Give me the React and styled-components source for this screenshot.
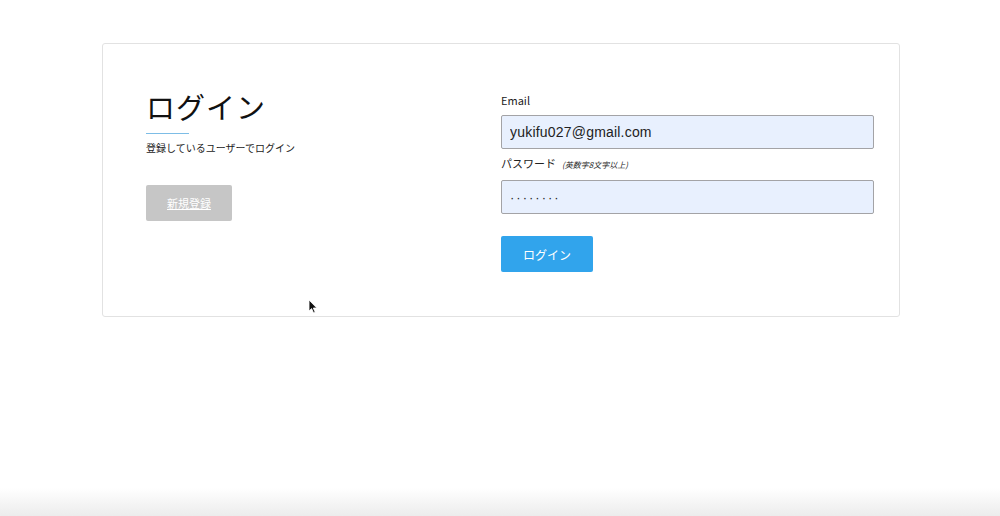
import React from "react";
import styled, { createGlobalStyle } from "styled-components";

const GlobalStyle = createGlobalStyle`
  html, body {
    margin: 0;
    padding: 0;
    background: #ffffff;
    font-family: "Noto Sans CJK JP", "Noto Sans", sans-serif;
    color: #222;
  }
`;

const Page = styled.div`
  position: relative;
  display: flex;
  flex-direction: column;
  height: 100vh;
  overflow: hidden;
`;

const Main = styled.div`
  flex: 1;
  padding: 43px 100px 0 102px;
`;

const Card = styled.div`
  display: grid;
  grid-template-columns: 1fr 373px;
  column-gap: 27px;
  padding: 46px 25px 44px 43px;
  border: 1px solid #e2e2e2;
  border-radius: 3px;
  background: #fff;
`;

const Intro = styled.div`
  display: flex;
  flex-direction: column;
  align-items: flex-start;
`;

const Title = styled.h1`
  margin: 0;
  font-size: 29px;
  font-weight: 400;
  line-height: 32px;
  letter-spacing: 1px;
  color: #111;
`;

const Rule = styled.div`
  width: 43px;
  height: 1px;
  margin-top: 11px;
  background: #7dbde6;
`;

const Lead = styled.p`
  margin: 7px 0 0;
  font-size: 10px;
  line-height: 14px;
  color: #222;
`;

const Button = styled.button`
  height: 36px;
  padding: 0 ${(p) => p.$pad}px;
  border: none;
  border-radius: 2px;
  font-family: inherit;
  font-size: ${(p) => p.$size}px;
  color: #fff;
  background: ${(p) => p.$bg};
  cursor: pointer;
`;

const SignUpButton = styled(Button)`
  margin-top: 30px;
  text-decoration: underline;
`;

const Form = styled.form`
  display: flex;
  flex-direction: column;
  align-items: flex-start;
  padding-top: 3px;
`;

const Label = styled.label`
  display: flex;
  align-items: baseline;
  gap: 6px;
  font-size: 11px;
  line-height: 14px;
  color: #222;
  margin-bottom: 8px;
`;

const Note = styled.span`
  font-size: 8px;
  font-style: italic;
`;

const Field = styled.input`
  box-sizing: border-box;
  width: 373px;
  height: 34px;
  margin-bottom: ${(p) => p.$gap}px;
  padding: 0 8px;
  border: 1px solid #a3a3a6;
  border-radius: 2px;
  background: #e8f0fe;
  font-family: "Liberation Sans", "Noto Sans", sans-serif;
  font-size: ${(p) => p.$size}px;
  letter-spacing: ${(p) => p.$spacing}px;
  color: #222;
  outline: none;
`;

const Shade = styled.div`
  height: 28px;
  background: linear-gradient(to bottom, rgba(235, 235, 235, 0), #ececec);
`;

const Pointer = styled.svg`
  position: absolute;
  left: 308px;
  top: 299px;
`;

export default function App() {
  return (
    <Page>
      <GlobalStyle />
      <Main>
        <Card>
          <Intro>
            <Title>ログイン</Title>
            <Rule />
            <Lead>登録しているユーザーでログイン</Lead>
            <SignUpButton type="button" $bg="#c6c6c6" $pad={21} $size={11}>
              新規登録
            </SignUpButton>
          </Intro>
          <Form onSubmit={(e) => e.preventDefault()}>
            <Label>Email</Label>
            <Field
              type="text"
              defaultValue="yukifu027@gmail.com"
              $gap={7}
              $size={14}
              $spacing={0.2}
            />
            <Label>
              パスワード<Note>(英数字8文字以上)</Note>
            </Label>
            <Field
              type="text"
              defaultValue="········"
              $gap={22}
              $size={13}
              $spacing={2}
            />
            <Button type="submit" $bg="#31a4ec" $pad={22} $size={12}>
              ログイン
            </Button>
          </Form>
        </Card>
      </Main>
      <Shade />
      <Pointer width="10" height="15" viewBox="0 0 10 15">
        <path
          d="M1 1 L1 12 L3.6 9.6 L5.6 14 L7.2 13.3 L5.3 9 L8.8 9 Z"
          fill="#111"
          stroke="#fff"
          strokeWidth="0.8"
        />
      </Pointer>
    </Page>
  );
}
